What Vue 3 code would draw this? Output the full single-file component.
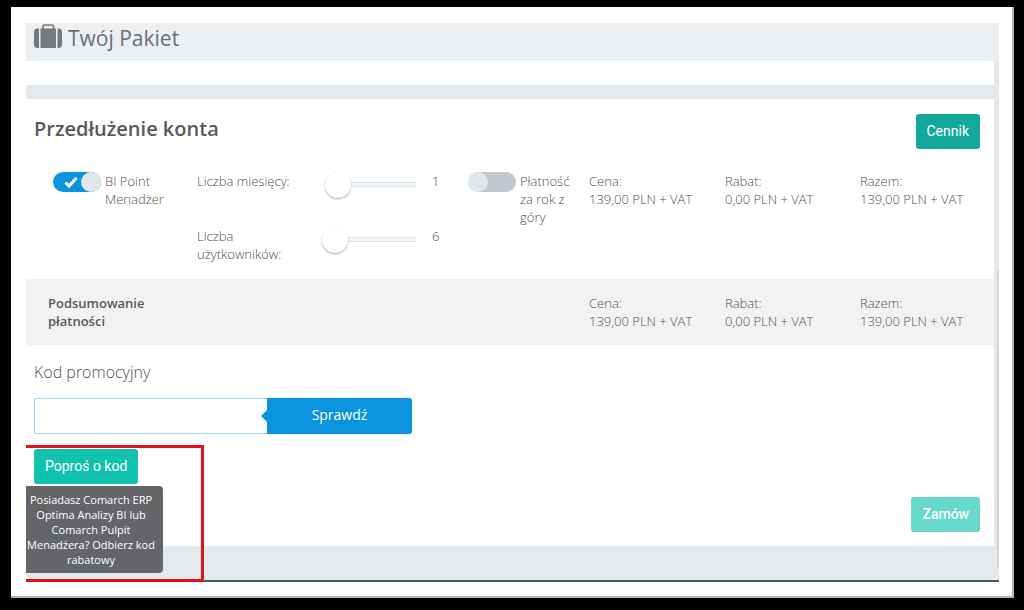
<script setup>
import { ref } from 'vue'

const manager = ref(true)
const yearly = ref(false)
const months = ref(1)
const users = ref(6)
const code = ref('')
const prices = [
  { label: 'Cena:', value: '139,00 PLN + VAT' },
  { label: 'Rabat:', value: '0,00 PLN + VAT' },
  { label: 'Razem:', value: '139,00 PLN + VAT' },
]
</script>

<template>
  <div class="frame">
    <main class="page">
      <header class="title">
        <svg class="case" viewBox="0 0 28 24" aria-hidden="true">
          <path d="M9 5V2.500Q9 1 10.500 1H18Q19.500 1 19.500 2.500V5" fill="none" stroke="#75797d" stroke-width="1.700" />
          <path d="M6.500 4.500H22V24H6.500Z" fill="#75797d" />
          <path d="M5 4.500V24H3.500Q0 24 0 20.500V8Q0 4.500 3.500 4.500ZM23.500 4.500V24H24.500Q28 24 28 20.500V8Q28 4.500 24.500 4.500Z" fill="#75797d" />
        </svg>
        <h1>Twój Pakiet</h1>
      </header>
      <div class="strip"></div>

      <section class="card">
        <div class="head">
          <h2>Przedłużenie konta</h2>
          <button type="button" class="btn dark">Cennik</button>
        </div>

        <div class="row options">
          <label class="switch">
            <input v-model="manager" type="checkbox" />
            <span class="pill">
              <svg viewBox="0 0 14 12" aria-hidden="true"><path d="M1.500 6.500L5 10L12.500 2" fill="none" stroke="#fff" stroke-width="3" /></svg>
            </span>
            <span>BI Point Menadżer</span>
          </label>
          <div class="sliders">
            <div class="slide">
              <label for="months">Liczba miesięcy:</label>
              <input id="months" v-model="months" type="range" min="0" max="24" />
              <output for="months">{{ months }}</output>
            </div>
            <div class="slide">
              <label for="users">Liczba użytkowników:</label>
              <input id="users" v-model="users" type="range" min="6" max="50" />
              <output for="users">{{ users }}</output>
            </div>
          </div>
          <label class="switch">
            <input v-model="yearly" type="checkbox" />
            <span class="pill"></span>
            <span>Płatność za rok z góry</span>
          </label>
          <div v-for="p in prices" :key="p.label">{{ p.label }}<br />{{ p.value }}</div>
        </div>

        <div class="row summary">
          <strong>Podsumowanie płatności</strong>
          <div v-for="p in prices" :key="p.label">{{ p.label }}<br />{{ p.value }}</div>
        </div>

        <div class="promo">
          <label for="code">Kod promocyjny</label>
          <div class="field">
            <input id="code" v-model="code" type="text" />
            <button type="button">Sprawdź</button>
          </div>
        </div>

        <div class="actions">
          <div class="ask">
            <button type="button" class="btn">Poproś o kod</button>
            <div class="tip" role="tooltip">Posiadasz Comarch ERP Optima Analizy BI lub Comarch Pulpit Menadżera? Odbierz kod rabatowy</div>
          </div>
          <button type="button" class="btn order" disabled>Zamów</button>
        </div>
      </section>
      <div class="rail"></div>
    </main>
  </div>
</template>

<style>
body {
  background: #000;
}
</style>

<style scoped>
* {
  box-sizing: border-box;
}
.frame {
  margin: 7px 10px 0 11px;
  padding: 16px 13px 14px 15px;
  background: #fff;
  border-right: 2px solid #b5b5b5;
  border-bottom: 2px solid #b5b5b5;
  font-family: "Open Sans", "Noto Sans", sans-serif;
  font-size: 13px;
  font-weight: 300;
  line-height: 18px;
  color: #505255;
}
.page {
  position: relative;
  padding-bottom: 34px;
  background: #e5e9ec;
  border-bottom: 2px solid #3d5f62;
}
.title {
  display: flex;
  gap: 6px;
  height: 38px;
  padding: 1px 8px;
  background: #edf0f2;
}
.case {
  width: 28px;
  height: 24px;
}
h1 {
  margin: 0;
  font-size: 21px;
  line-height: 28px;
  font-weight: 400;
  color: #6a6e72;
}
.strip {
  height: 24px;
  margin: 0 5px 14px 0;
  background: #fff;
}
.card {
  margin-right: 5px;
  background: #fff;
}
.head {
  display: flex;
  justify-content: space-between;
  padding: 15px 14px 0 8px;
}
h2 {
  margin: 0;
  font-size: 20px;
  line-height: 30px;
  font-weight: 600;
  color: #58595b;
}
.btn {
  height: 35px;
  padding: 0 11px 2px;
  border: 0;
  border-radius: 3px;
  background: #12c2b0;
  color: #fff;
  font: 400 14px Roboto, sans-serif;
}
.btn.dark {
  background: #12a99c;
}
.btn.order {
  background: #66d8cc;
  font-weight: 500;
}
.row {
  display: grid;
  grid-template-columns: 144fr 271fr 121fr 136fr 135fr 134fr;
  padding-left: 27px;
}
.options {
  padding-top: 23px;
  padding-bottom: 16px;
}
.switch {
  display: grid;
  grid-template-columns: 48px 61px;
  column-gap: 4px;
  align-items: start;
}
.switch input {
  position: absolute;
  opacity: 0;
}
.pill {
  display: flex;
  align-items: center;
  justify-content: flex-start;
  height: 20px;
  border-radius: 10px;
  background: #c1c9cf;
}
.pill svg {
  width: 14px;
  margin: 0 3px 0 11px;
}
.pill::after {
  content: "";
  width: 20px;
  height: 20px;
  border-radius: 10px;
  background: #e3e7ea;
}
.switch input:checked + .pill {
  background: #0a94de;
}
.sliders {
  display: grid;
  gap: 29px;
  align-content: start;
}
.slide {
  display: grid;
  grid-template-columns: 109px 94px 20px;
  column-gap: 16px;
  justify-content: start;
  align-items: start;
}
.slide label {
  margin-right: 8px;
}
.slide input {
  appearance: none;
  width: 94px;
  height: 26px;
  margin: 0;
  background: linear-gradient(#f0f8f7, #f0f8f7) right 11px / 88px 3px no-repeat, linear-gradient(#d8e6e5, #d8e6e5) right 10px / 90px 5px no-repeat;
}
.slide input::-webkit-slider-thumb {
  appearance: none;
  width: 26px;
  height: 26px;
  border-radius: 13px;
  background: #fff;
  box-shadow: 0 1px 2px #aaa;
}
.summary {
  padding-top: 15px;
  padding-bottom: 16px;
  background: #f2f2f2;
}
.summary strong {
  grid-column: 1 / 4;
  width: 120px;
  margin-left: -5px;
  font-weight: 600;
  color: #58595b;
}
.promo {
  padding: 14px 8px 0;
}
.promo label {
  display: block;
  font-size: 16px;
  line-height: 24px;
}
.field {
  display: flex;
  width: 39%;
  min-width: 378px;
  height: 36px;
  margin-top: 14px;
}
.field input {
  flex: 1;
  min-width: 0;
  border: 1px solid #a9d6ef;
  border-right: 0;
  border-radius: 2px 0 0 2px;
  background: #fff;
  font: inherit;
}
.field button {
  position: relative;
  width: 145px;
  padding-bottom: 4px;
  border: 0;
  border-radius: 0 3px 3px 0;
  background: #0a94de;
  color: #fff;
  font: 400 14px "Open Sans", sans-serif;
}
.field button::before {
  content: "";
  position: absolute;
  left: -6px;
  top: 12px;
  border: solid transparent;
  border-width: 6px 6px 6px 0;
  border-right-color: #0a94de;
}
.actions {
  display: flex;
  justify-content: space-between;
  align-items: flex-end;
  height: 112px;
  padding: 0 14px 14px 0;
}
.ask {
  position: relative;
  align-self: flex-start;
  width: 178px;
  height: 137px;
  margin: 11px 0 -50px;
  padding: 1px 8px;
  border: 3px solid #e60f1e;
  border-left: 0;
}
.tip {
  position: absolute;
  left: 0;
  top: 38px;
  width: 137px;
  padding: 6px 7px 6px 0;
  border-radius: 0 4px 4px 0;
  background: #636569;
  color: #fff;
  font-size: 11px;
  font-weight: 400;
  line-height: 15px;
  text-align: center;
}
.rail {
  position: absolute;
  right: 0;
  top: 247px;
  bottom: 12px;
  width: 2px;
  background: #d2d6d9;
}
</style>
